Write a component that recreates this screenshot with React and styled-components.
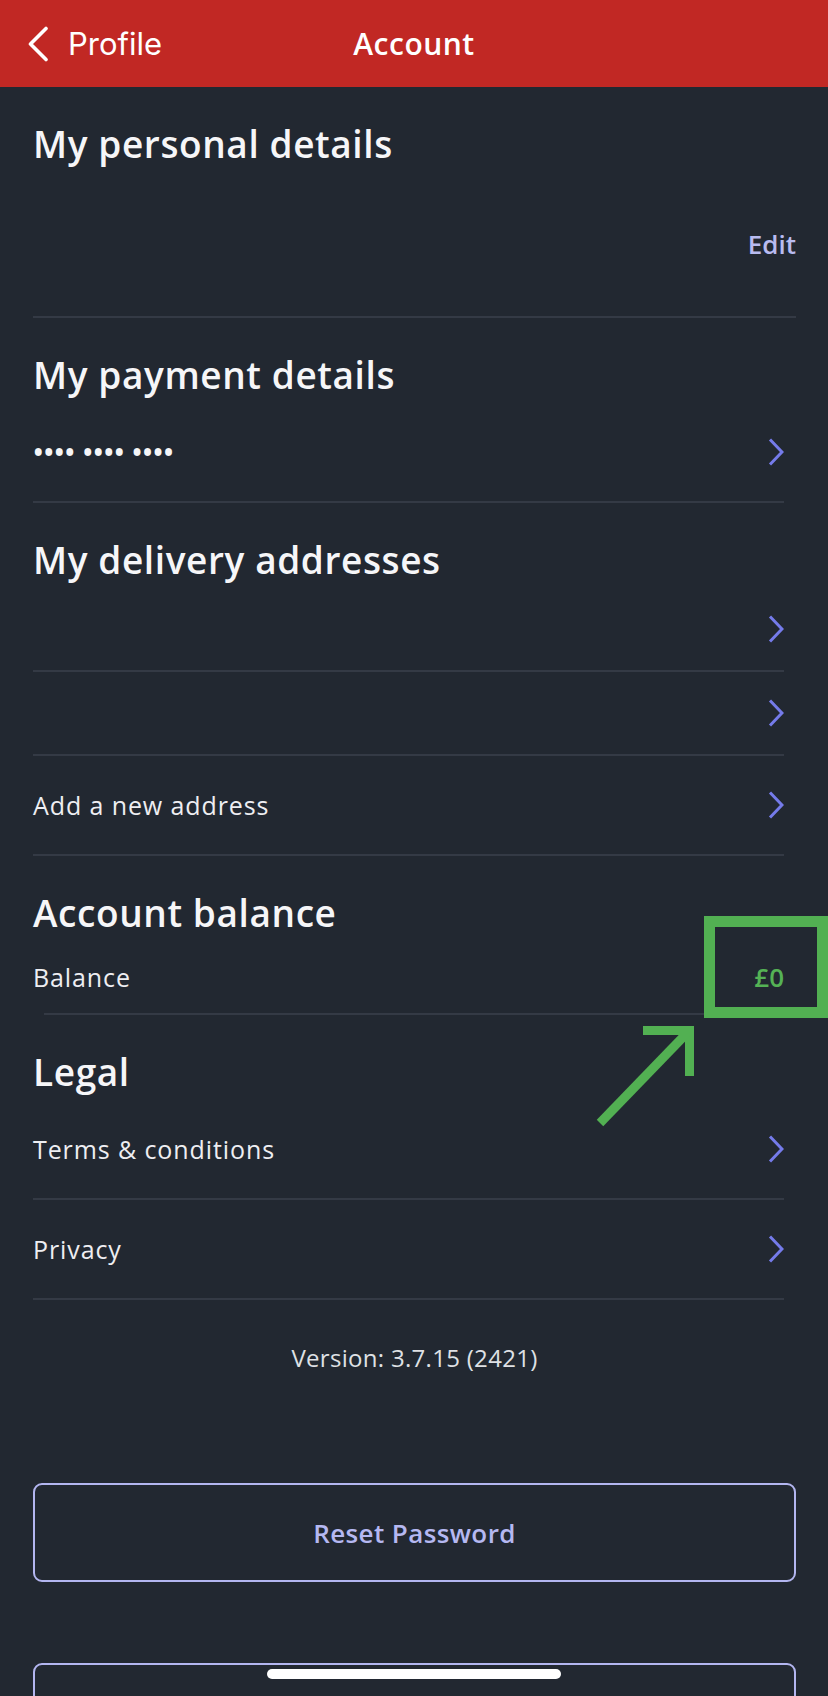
import React from 'react';
import styled, { createGlobalStyle } from 'styled-components';

const FONT = `"Open Sans", "Noto Sans", sans-serif`;

const Global = createGlobalStyle`
  html, body { margin: 0; padding: 0; background: #222831; }
  body { font-family: ${FONT}; -webkit-font-smoothing: antialiased; overflow: hidden; }
  * { box-sizing: border-box; }
`;

const Screen = styled.div`
  min-height: 1696px;
  background: #222831;
  color: #f5f5f7;
`;

const NavBar = styled.header`
  height: 87px;
  background: #c12824;
  display: grid;
  grid-template-columns: 1fr auto 1fr;
  align-items: center;
`;

const BackButton = styled.button`
  justify-self: start;
  display: flex;
  align-items: center;
  gap: 19px;
  padding: 0 0 0 27px;
  background: none;
  border: 0;
  color: #fff;
  font-family: Inter, "Open Sans", sans-serif;
  font-size: 31px;
  font-weight: 400;
  cursor: pointer;
`;

const NavTitle = styled.h1`
  margin: 0;
  font-family: ${FONT};
  font-size: 30px;
  letter-spacing: 0.5px;
  font-weight: 600;
  color: #fff;
`;

const Content = styled.main`
  padding: 0 32px 0 33px;
`;

const Section = styled.section`
  padding-top: 35px;
`;

const Heading = styled.h2`
  margin: 0 0 6px;
  font-size: 37px;
  line-height: 44px;
  letter-spacing: 0.6px;
  font-weight: 600;
  color: #f6f6f8;
`;

const DetailsBody = styled.div`
  display: flex;
  justify-content: flex-end;
  padding: 50px 0 50px;
`;

const EditLink = styled.a`
  font-size: 26px;
  line-height: 44px;
  font-weight: 600;
  color: #b8bbf0;
  text-decoration: none;
`;

const Divider = styled.hr`
  margin: 0 ${p => p.$right ?? 0}px 0 ${p => p.$left ?? 0}px;
  border: 0;
  height: 2px;
  background: #343a45;
`;

const Row = styled.div`
  display: flex;
  align-items: center;
  justify-content: space-between;
  padding: ${p => p.$pad ?? 27}px 0;
  margin-right: 12px;
  min-height: ${p => p.$minH ?? 98}px;
  position: relative;
`;

const RowLabel = styled.span`
  font-size: 25px;
  line-height: 44px;
  font-weight: 400;
  letter-spacing: 0.9px;
  color: #eeeef2;
`;

const Masked = styled.span`
  font-size: 28px;
  line-height: 44px;
  font-weight: 600;
  letter-spacing: 0;
  color: #f5f5f7;
`;

const Amount = styled.span`
  font-size: 26px;
  line-height: 44px;
  font-weight: 600;
  color: #55b255;
`;

const Highlight = styled.div`
  position: absolute;
  top: -25px;
  right: -44px;
  width: 124px;
  height: 102px;
  border: 11px solid #52b052;
  pointer-events: none;
`;

const ArrowMark = styled.svg`
  position: absolute;
  left: 557px;
  top: 79px;
  overflow: visible;
  pointer-events: none;
`;

const Version = styled.p`
  margin: 36px 0 0;
  text-align: center;
  font-size: 24px;
  line-height: 44px;
  letter-spacing: 0.3px;
  color: #dfe1e5;
`;

const OutlineButton = styled.button`
  display: block;
  width: 100%;
  height: 99px;
  margin-top: ${p => p.$top}px;
  background: transparent;
  border: 2px solid #b3b6f0;
  border-radius: 9px;
  color: #b5b8f1;
  font-family: ${FONT};
  font-size: 26px;
  letter-spacing: 0.4px;
  font-weight: 600;
  cursor: pointer;
`;

const HomeIndicator = styled.div`
  position: fixed;
  left: 50%;
  bottom: 17px;
  width: 294px;
  height: 10px;
  margin-left: -147px;
  border-radius: 5px;
  background: #ffffff;
`;

const BackChevron = () => (
  <svg width="22" height="36" viewBox="0 0 22 36" fill="none">
    <path d="M19 2.5 L3.5 18 L19 33.5" stroke="#fff" strokeWidth="3.6" strokeLinecap="round" strokeLinejoin="round" />
  </svg>
);

const Chevron = () => (
  <svg width="16" height="28" viewBox="0 0 16 28" fill="none">
    <path d="M2 1.5 L14 14 L2 26.5" stroke="#757bea" strokeWidth="3" strokeLinejoin="miter" />
  </svg>
);

const ListRow = ({ label, children, empty }) => (
  <>
    <Row $minH={empty ? 82 : 98}>
      {label ? <RowLabel>{label}</RowLabel> : children || <span />}
      <Chevron />
    </Row>
    <Divider $right={12} />
  </>
);

export default function App() {
  return (
    <Screen>
      <Global />
      <NavBar>
        <BackButton>
          <BackChevron />
          Profile
        </BackButton>
        <NavTitle>Account</NavTitle>
        <span />
      </NavBar>

      <Content>
        <Section>
          <Heading>My personal details</Heading>
          <DetailsBody>
            <EditLink href="#">Edit</EditLink>
          </DetailsBody>
          <Divider />
        </Section>

        <Section>
          <Heading>My payment details</Heading>
          <ListRow>
            <Masked>•••• •••• ••••</Masked>
          </ListRow>
        </Section>

        <Section>
          <Heading>My delivery addresses</Heading>
          <ListRow empty />
          <ListRow empty />
          <ListRow label="Add a new address" />
        </Section>

        <Section>
          <Heading>Account balance</Heading>
          <Row $pad={14} $minH={72}>
            <RowLabel>Balance</RowLabel>
            <Amount>£0</Amount>
            <Highlight />
            <ArrowMark width="110" height="112" viewBox="0 0 110 112" fill="none">
              <path d="M53 10.5 H99.5 V56" stroke="#52b052" strokeWidth="9" strokeLinejoin="miter" strokeLinecap="butt" />
              <path d="M10 103 L97 13" stroke="#52b052" strokeWidth="9" strokeLinecap="butt" />
            </ArrowMark>
          </Row>
          <Divider $left={11} />
        </Section>

        <Section>
          <Heading>Legal</Heading>
          <ListRow label="Terms & conditions" />
          <ListRow label="Privacy" />
        </Section>

        <Version>Version: 3.7.15 (2421)</Version>

        <OutlineButton $top={103}>Reset Password</OutlineButton>
        <OutlineButton $top={81} aria-label="Log out" />
      </Content>
      <HomeIndicator />
    </Screen>
  );
}
